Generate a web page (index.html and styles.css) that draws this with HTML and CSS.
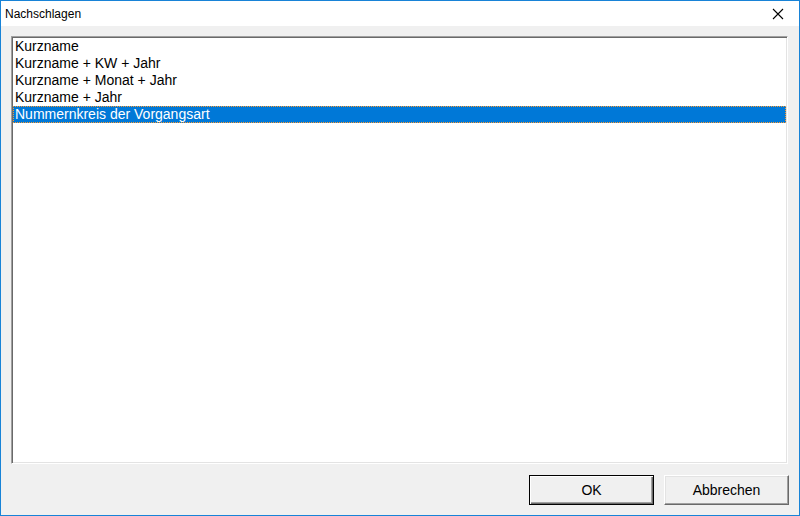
FILE: index.html
```html
<!DOCTYPE html>
<html lang="de">
  <head>
    <meta charset="UTF-8" />
    <meta name="viewport" content="width=device-width, initial-scale=1.0" />
    <title>Nachschlagen</title>
    <link rel="stylesheet" href="styles.css">
  </head>
  <body>
    <div class="window">
      <div class="titleBar">
        <span class="title">Nachschlagen</span>
        <span class="close">
          <svg width="12" height="12" viewBox="0 0 12 12">
            <path d="M1 1 L11 11 M11 1 L1 11" stroke="#000" stroke-width="1.1" fill="none" />
          </svg>
        </span>
      </div>
      <div class="content">
        <div class="list">
          <div class="item">Kurzname</div>
          <div class="item">Kurzname + KW + Jahr</div>
          <div class="item">Kurzname + Monat + Jahr</div>
          <div class="item">Kurzname + Jahr</div>
          <div class="item selected">Nummernkreis der Vorgangsart</div>
        </div>
        <div class="actWrapper">
          <button class="btn default">OK</button>
          <button class="btn">Abbrechen</button>
        </div>
      </div>
    </div>
  </body>
</html>
```

FILE: styles.css
```css
* {
  margin: 0;
  padding: 0;
  box-sizing: border-box;
}

html,
body {
  height: 100%;
}

body {
  font-family: "Liberation Sans", Arial, sans-serif;
  background: #f0f0f0;
}

.window {
  display: flex;
  flex-direction: column;
  height: 100vh;
  border: 1px solid #1883d7;
  background: #f0f0f0;
}

.titleBar {
  display: flex;
  align-items: center;
  justify-content: space-between;
  height: 25px;
  background: #fff;
  padding: 0 0 0 4px;
}

.title {
  font-size: 12px;
  color: #000;
}

.close {
  display: flex;
  align-items: center;
  justify-content: center;
  width: 40px;
  height: 25px;
  margin-right: 1px;
}

.content {
  flex: 1;
  display: flex;
  flex-direction: column;
  padding: 10px 10px 10px 10px;
}

.list {
  flex: 1;
  background: #fff;
  border: 1px solid;
  border-color: #a0a0a0 #fff #fff #a0a0a0;
  box-shadow: inset 1px 1px #696969, inset -1px -1px #e3e3e3;
  padding: 1px 1px 1px 1px;
  margin-right: 1px;
}

.item {
  height: 17px;
  line-height: 17px;
  font-size: 14px;
  padding-left: 2px;
  color: #000;
  white-space: nowrap;
}

.selected {
  background: #0078d7;
  color: #fff;
  outline: 1px dotted #ff9a2e;
  outline-offset: -1px;
  line-height: 17px;
}

.actWrapper {
  display: flex;
  justify-content: flex-end;
  gap: 10px;
  margin-top: 11px;
}

.btn {
  width: 125px;
  height: 30px;
  font-family: "Liberation Sans", Arial, sans-serif;
  font-size: 14px;
  color: #000;
  background: #f0f0f0;
  border: 1px solid;
  border-color: #fff #696969 #696969 #fff;
  box-shadow: inset -1px -1px #a0a0a0, inset 1px 1px #e3e3e3;
}

.default {
  border: 1px solid #000;
  box-shadow: inset 1px 1px #fff, inset -1px -1px #696969, inset -2px -2px #a0a0a0;
}
```
